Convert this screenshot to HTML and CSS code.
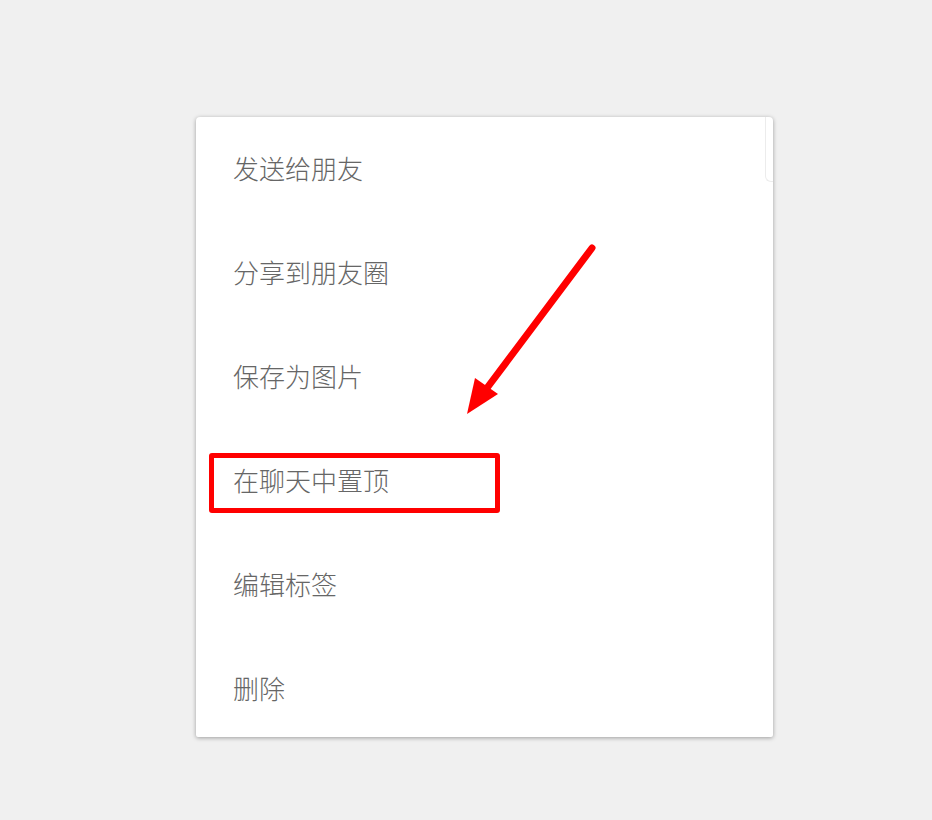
FILE: index.html
```html
<!DOCTYPE html>
<html lang="zh-CN">
<head>
    <meta charset="UTF-8">
    <meta name="viewport" content="width=device-width, initial-scale=1.0">
    <title>菜单</title>
    <link rel="stylesheet" href="styles.css">
</head>
<body>
    <div class="page">
        <div class="menu">
            <div class="menu-scroll"></div>
            <div class="menu-item">发送给朋友</div>
            <div class="menu-item">分享到朋友圈</div>
            <div class="menu-item">保存为图片</div>
            <div class="menu-item">在聊天中置顶</div>
            <div class="menu-item">编辑标签</div>
            <div class="menu-item">删除</div>

            <!-- annotation -->
            <div class="highlight"></div>
            <svg class="arrow" width="160" height="190" viewBox="0 0 160 190">
                <line x1="142" y1="16" x2="34" y2="160" stroke="#ff0000" stroke-width="7" stroke-linecap="round"/>
                <polygon points="17,182 25,146 48,162" fill="#ff0000"/>
            </svg>
        </div>
    </div>
</body>
</html>
```

FILE: styles.css
```css
body {
    margin: 0;
    background: #f0f0f0;
    font-family: "Noto Sans CJK SC", "Noto Sans", sans-serif;
}
.page {
    width: 932px;
    height: 820px;
    padding: 117px 0 0 196px;
    box-sizing: border-box;
}
.menu {
    position: relative;
    width: 577px;
    height: 620px;
    background: #fff;
    border-radius: 4px 4px 2px 2px;
    box-shadow: 0 1px 4px rgba(0,0,0,0.35);
    padding-top: 1px;
    box-sizing: border-box;
    overflow: hidden;
}
.menu-scroll {
    position: absolute;
    top: 0;
    right: 0;
    width: 7px;
    height: 64px;
    border-left: 1px solid #ececec;
    border-bottom: 1px solid #ececec;
    border-bottom-left-radius: 6px;
}
.menu-item {
    height: 104px;
    display: flex;
    align-items: center;
    padding: 0 0 6px 37px;
    box-sizing: border-box;
    font-size: 26px;
    font-weight: 300;
    color: #666;
}
.highlight {
    position: absolute;
    left: 13px;
    top: 336px;
    width: 291px;
    height: 60px;
    border: 5px solid #ff0000;
    border-radius: 3px;
    box-sizing: border-box;
}
.arrow {
    position: absolute;
    left: 254px;
    top: 115px;
}
```
